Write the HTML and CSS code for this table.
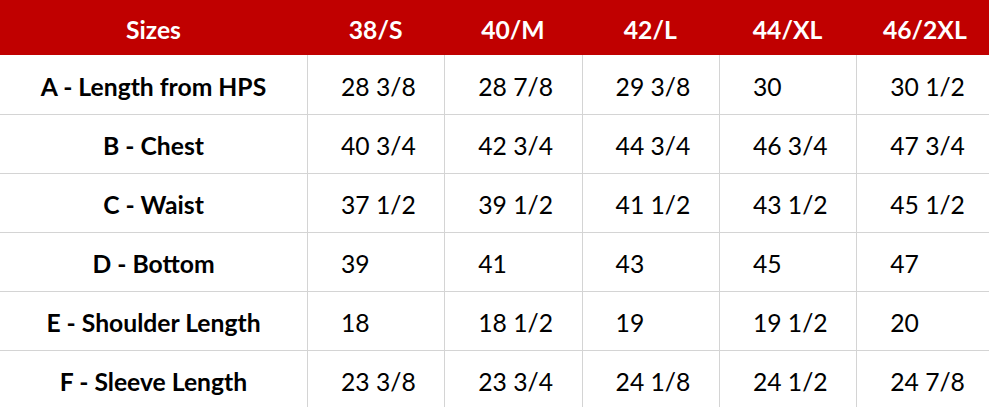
FILE: index.html
```html
<!DOCTYPE html>
<html lang="en">
<head>
<meta charset="utf-8">
<title>Size Chart</title>
<link rel="stylesheet" href="styles.css">
</head>
<body>
<div class="chart">
  <div class="row head">
    <div class="cell label">Sizes</div>
    <div class="cell">38/S</div>
    <div class="cell">40/M</div>
    <div class="cell">42/L</div>
    <div class="cell">44/XL</div>
    <div class="cell">46/2XL</div>
  </div>
  <div class="row">
    <div class="cell label">A - Length from HPS</div>
    <div class="cell val">28 3/8</div>
    <div class="cell val">28 7/8</div>
    <div class="cell val">29 3/8</div>
    <div class="cell val">30</div>
    <div class="cell val">30 1/2</div>
  </div>
  <div class="row">
    <div class="cell label">B - Chest</div>
    <div class="cell val">40 3/4</div>
    <div class="cell val">42 3/4</div>
    <div class="cell val">44 3/4</div>
    <div class="cell val">46 3/4</div>
    <div class="cell val">47 3/4</div>
  </div>
  <div class="row">
    <div class="cell label">C - Waist</div>
    <div class="cell val">37 1/2</div>
    <div class="cell val">39 1/2</div>
    <div class="cell val">41 1/2</div>
    <div class="cell val">43 1/2</div>
    <div class="cell val">45 1/2</div>
  </div>
  <div class="row">
    <div class="cell label">D - Bottom</div>
    <div class="cell val">39</div>
    <div class="cell val">41</div>
    <div class="cell val">43</div>
    <div class="cell val">45</div>
    <div class="cell val">47</div>
  </div>
  <div class="row">
    <div class="cell label">E - Shoulder Length</div>
    <div class="cell val">18</div>
    <div class="cell val">18 1/2</div>
    <div class="cell val">19</div>
    <div class="cell val">19 1/2</div>
    <div class="cell val">20</div>
  </div>
  <div class="row">
    <div class="cell label">F - Sleeve Length</div>
    <div class="cell val">23 3/8</div>
    <div class="cell val">23 3/4</div>
    <div class="cell val">24 1/8</div>
    <div class="cell val">24 1/2</div>
    <div class="cell val">24 7/8</div>
  </div>
</div>
</body>
</html>
```

FILE: styles.css
```css
html, body {
  margin: 0;
  padding: 0;
  background: #ffffff;
  overflow: hidden;
}

.chart {
  width: 1000px;
  font-family: "Lato", "Liberation Sans", sans-serif;
  font-size: 24.7px;
  color: #000000;
}

.row {
  display: grid;
  grid-template-columns: 307px repeat(5, 137.3px);
  height: 59px;
  box-sizing: border-box;
  border-top: 1px solid #d4d4d4;
}

.row.head {
  height: 55px;
  border-top: none;
  background: #c00000;
  color: #ffffff;
  font-weight: 700;
}

.row.head + .row {
  border-top: none;
}

.cell {
  display: flex;
  align-items: center;
  justify-content: center;
  white-space: nowrap;
  padding-top: 3px;
  box-sizing: border-box;
}

.row .cell + .cell {
  border-left: 1px solid #d4d4d4;
}

.row.head .cell + .cell {
  border-left: none;
}

.label {
  font-weight: 700;
}

.val {
  justify-content: flex-start;
  padding-left: 33px;
}
```
